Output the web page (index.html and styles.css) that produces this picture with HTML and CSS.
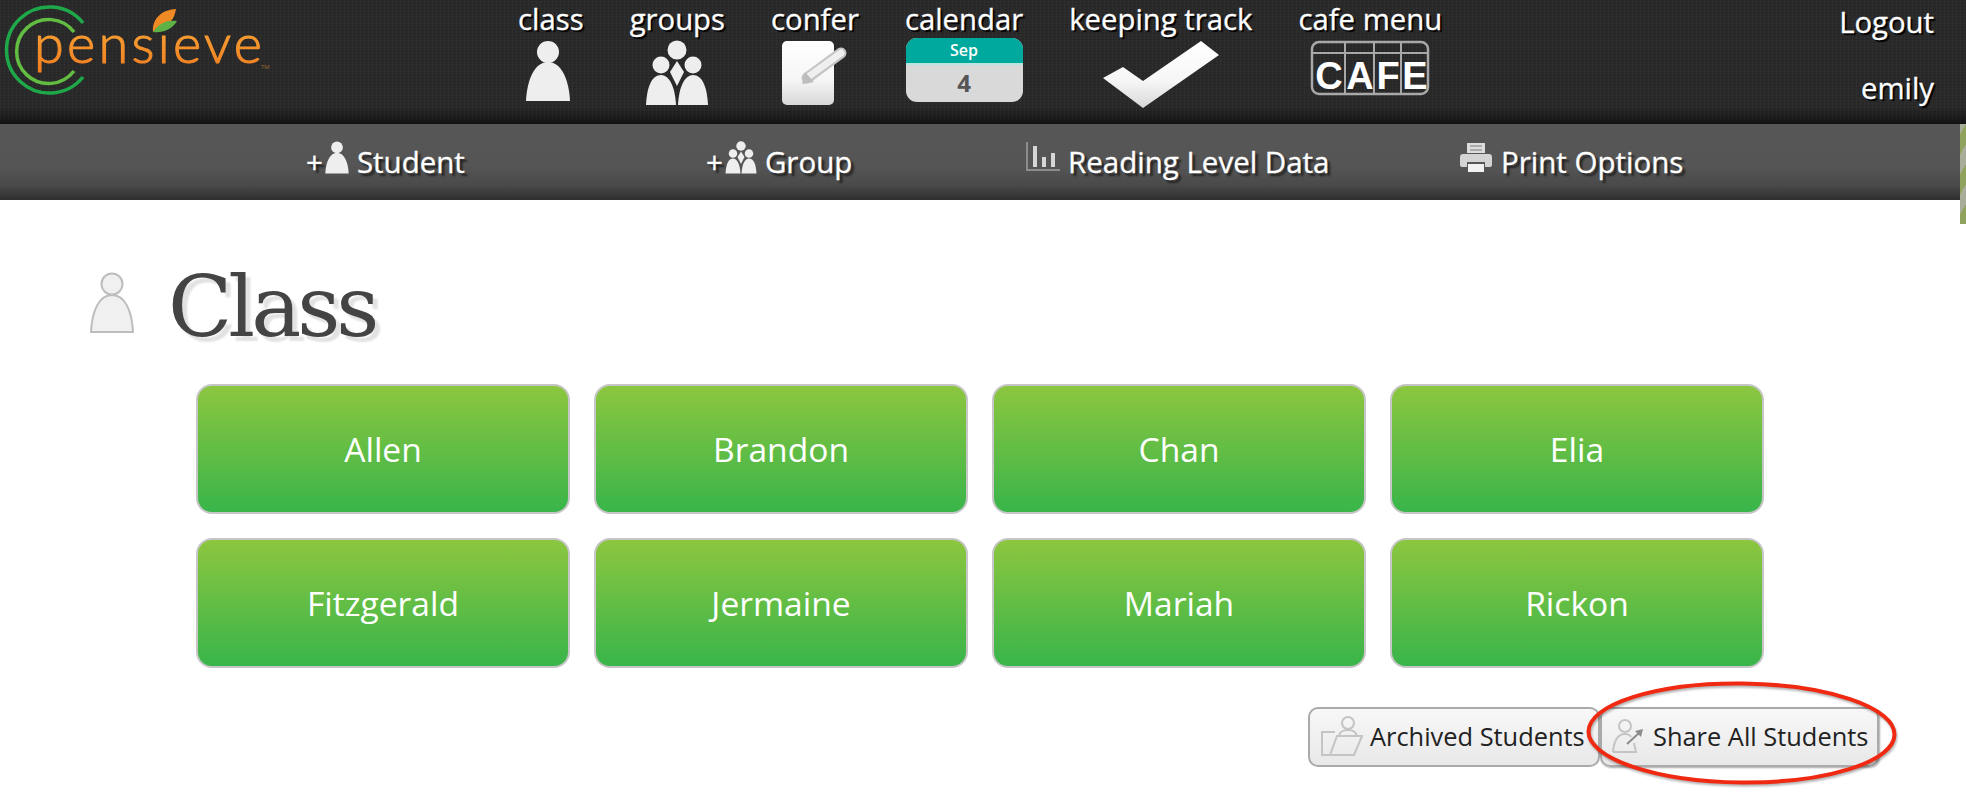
FILE: index.html
```html
<!DOCTYPE html>
<html lang="en">
<head>
    <meta charset="UTF-8">
    <title>Pensieve - Class</title>
    <link rel="stylesheet" href="styles.css">
</head>
<body>
    <svg class="defs" width="0" height="0">
        <defs>
            <linearGradient id="logoText" x1="0" y1="0" x2="0" y2="1">
                <stop offset="0" stop-color="#fbb03b"/>
                <stop offset="1" stop-color="#f07a1f"/>
            </linearGradient>
            <linearGradient id="padFill" x1="0" y1="0" x2="0" y2="1">
                <stop offset="0" stop-color="#ffffff"/>
                <stop offset="0.6" stop-color="#f6f6f6"/>
                <stop offset="1" stop-color="#d8d8d8"/>
            </linearGradient>
            <symbol id="person" viewBox="0 0 44 62">
                <circle cx="22" cy="12" r="11"/>
                <path d="M0 61C1 39 9 22 22 22C35 22 43 39 44 61Z"/>
            </symbol>
            <symbol id="people" viewBox="0 0 64 66">
                <circle cx="32" cy="10" r="9.5"/>
                <circle cx="16" cy="25" r="8.5"/>
                <circle cx="48" cy="25" r="8.5"/>
                <path d="M32 21L39 32L32 46L25 32Z"/>
                <path d="M1 65C2 46 7 35 16 35C24 35 30 46 31 65Z"/>
                <path d="M33 65C34 46 40 35 48 35C57 35 62 46 63 65Z"/>
            </symbol>
        </defs>
    </svg>

    <header class="top-bar">
        <svg class="logo" width="290" height="100" viewBox="0 0 290 100">
            <path d="M83 23A43 43 0 1 0 83 77" fill="none" stroke="#1fa84a" stroke-width="3.5"/>
            <path d="M74 32A32 32 0 1 0 74 71" fill="none" stroke="#62bd42" stroke-width="3.5"/>
            <text x="34" y="63" textLength="228" lengthAdjust="spacing" class="logo-text">pensieve</text>
            <text x="261" y="69" class="logo-tm">TM</text>
            <path d="M153 32C152 20 160 10 176 9C175 14 174 18 171 21C164 23 158 26 153 32Z" fill="#f08a24"/>
            <path d="M153 32C160 22 168 20 177 21C172 30 162 33 153 32Z" fill="#5fb246"/>
        </svg>

        <nav class="main-nav">
            <div class="nav-item">
                <span class="nav-label">class</span>
                <svg class="nav-icon class-icon" width="44" height="62" fill="#eeeeee"><use href="#person"/></svg>
            </div>
            <div class="nav-item">
                <span class="nav-label">groups</span>
                <svg class="nav-icon" width="64" height="66" fill="#eeeeee"><use href="#people"/></svg>
            </div>
            <div class="nav-item">
                <span class="nav-label">confer</span>
                <svg class="nav-icon confer-icon" width="70" height="66" viewBox="0 0 70 66">
                    <rect x="1" y="1" width="52" height="64" rx="5" fill="url(#padFill)"/>
                    <path d="M26 38L60 13" stroke="#c4c4c4" stroke-width="11" stroke-linecap="round"/>
                    <path d="M27 37L60 13" stroke="#efefef" stroke-width="7" stroke-linecap="round"/>
                    <path d="M21 44L24 32L33 42Z" fill="#bdbdbd"/>
                </svg>
            </div>
            <div class="nav-item">
                <span class="nav-label">calendar</span>
                <div class="calendar">
                    <div class="calendar-month">Sep</div>
                    <div class="calendar-day">4</div>
                </div>
            </div>
            <div class="nav-item">
                <span class="nav-label">keeping track</span>
                <svg class="nav-icon" width="118" height="70" viewBox="0 0 118 70">
                    <path d="M1 38L21 27L41 41L99 1L117 15L41 68Z" fill="url(#padFill)"/>
                </svg>
            </div>
            <div class="nav-item">
                <span class="nav-label">cafe menu</span>
                <svg class="nav-icon cafe-icon" width="120" height="56" viewBox="0 0 120 56">
                    <rect x="2" y="2" width="116" height="52" rx="7" fill="none" stroke="#a8a8a8" stroke-width="2.5"/>
                    <path d="M2 13H118M35 2V54M64 2V54M91 2V54" fill="none" stroke="#a8a8a8" stroke-width="2"/>
                    <text x="19" y="49" class="cafe-letter">C</text>
                    <text x="50" y="49" class="cafe-letter">A</text>
                    <text x="78" y="49" class="cafe-letter">F</text>
                    <text x="105" y="49" class="cafe-letter">E</text>
                </svg>
            </div>
        </nav>

        <div class="user-box">
            <a class="nav-label logout">Logout</a>
            <span class="nav-label">emily</span>
        </div>
    </header>

    <div class="sub-bar">
        <div class="sub-item sub-student">
            <span class="plus">+</span>
            <svg width="24" height="33" fill="#eeeeee"><use href="#person"/></svg>
            <span>Student</span>
        </div>
        <div class="sub-item sub-group">
            <span class="plus">+</span>
            <svg width="32" height="33" fill="#eeeeee"><use href="#people"/></svg>
            <span>Group</span>
        </div>
        <div class="sub-item sub-reading">
            <svg width="34" height="30" viewBox="0 0 34 30">
                <path d="M1 0V28H34" fill="none" stroke="#8c8c8c" stroke-width="2"/>
                <path d="M7 4H11V25H7ZM16 15H20V25H16ZM25 11H29V25H25Z" fill="#d6d6d6"/>
            </svg>
            <span>Reading Level Data</span>
        </div>
        <div class="sub-item sub-print">
            <svg width="32" height="31" viewBox="0 0 32 31">
                <path d="M7 1H25V11H7Z" fill="#dddddd"/>
                <path d="M10 4H22M10 8H22" stroke="#999999" stroke-width="1.5"/>
                <path d="M3 12H29Q32 12 32 15V23Q32 25 29 25H25V20H7V25H3Q0 25 0 23V15Q0 12 3 12Z" fill="#d4d4d4"/>
                <path d="M8 22H24V30H8Z" fill="#f2f2f2"/>
            </svg>
            <span>Print Options</span>
        </div>
    </div>
    <div class="edge-strip"></div>

    <main>
        <div class="page-title">
            <svg class="title-icon" width="46" height="62" viewBox="0 0 46 62">
                <circle cx="23" cy="12" r="10.5" fill="#f0f0f0" stroke="#bdbdbd" stroke-width="2"/>
                <path d="M2 60C3 39 10 23 23 23C36 23 43 39 44 60Z" fill="#f0f0f0" stroke="#bdbdbd" stroke-width="2"/>
            </svg>
            <h1>Class</h1>
        </div>

        <div class="student-grid">
            <a class="student-card">Allen</a>
            <a class="student-card">Brandon</a>
            <a class="student-card">Chan</a>
            <a class="student-card">Elia</a>
            <a class="student-card">Fitzgerald</a>
            <a class="student-card">Jermaine</a>
            <a class="student-card">Mariah</a>
            <a class="student-card">Rickon</a>
        </div>

        <div class="actions">
            <button class="action-btn archive-btn">
                <svg width="42" height="40" viewBox="0 0 42 40">
                    <circle cx="27" cy="7" r="6" fill="none" stroke="#c4c4c4" stroke-width="2"/>
                    <path d="M18 20C19 15 22 14 27 14C32 14 35 16 36 20" fill="none" stroke="#c4c4c4" stroke-width="2"/>
                    <path d="M9 39H1V16H14M9 39L16 20H41L33 39Z" fill="none" stroke="#c4c4c4" stroke-width="2"/>
                </svg>
                <span>Archived Students</span>
            </button>
            <button class="action-btn share-btn">
                <svg width="32" height="34" viewBox="0 0 32 34">
                    <circle cx="13" cy="7" r="6" fill="none" stroke="#c4c4c4" stroke-width="2"/>
                    <path d="M1 33C2 22 6 15 13 15C16 15 18 16 19 18M22 24L24 33H1" fill="none" stroke="#c4c4c4" stroke-width="2"/>
                    <path d="M15 25L27 14" stroke="#8c8c8c" stroke-width="2"/>
                    <path d="M23 12L31 10L29 18Z" fill="#8c8c8c"/>
                </svg>
                <span>Share All Students</span>
            </button>
            <svg class="circle-mark" width="317" height="111" viewBox="0 0 317 111">
                <ellipse cx="158.5" cy="53" rx="153" ry="49.5" fill="none" stroke="#f02a12" stroke-width="4" transform="rotate(0.6 158 53)"/>
            </svg>
        </div>
    </main>
</body>
</html>
```

FILE: styles.css
```css
html, body {
    height: 100%;
}
body {
    margin: 0;
    background-color: #fff;
    font-family: "Open Sans", sans-serif;
    overflow: hidden;
    position: relative;
}
.defs {
    display: block;
    height: 0;
}

/* top bar */
.top-bar {
    display: flex;
    height: 124px;
    position: relative;
    background-color: #2a2a2a;
    background-image:
        linear-gradient(rgba(0, 0, 0, 0) 86%, rgba(0, 0, 0, 0.55) 100%),
        repeating-linear-gradient(90deg, rgba(255, 255, 255, 0.025) 0, rgba(255, 255, 255, 0.025) 1px, transparent 1px, transparent 4px),
        repeating-linear-gradient(0deg, rgba(0, 0, 0, 0.09) 0, rgba(0, 0, 0, 0.09) 1px, transparent 1px, transparent 3px);
}
.logo {
    position: absolute;
    left: 0;
    top: 0;
}
.logo-text {
    font-family: Lato, sans-serif;
    font-weight: 300;
    font-size: 54px;
    fill: url(#logoText);
    stroke: url(#logoText);
    stroke-width: 1.1px;
}
.logo-tm {
    font-size: 6px;
    fill: #9a6a30;
}
.main-nav {
    display: flex;
    gap: 46px;
    margin-left: 518px;
}
.nav-item {
    display: flex;
    flex-direction: column;
    align-items: center;
    height: 124px;
}
.nav-label {
    font-size: 29.3px;
    line-height: 38px;
    color: #fff;
    white-space: nowrap;
    -webkit-text-stroke: 0.3px #fff;
    text-shadow: 2px 2px 1px #000;
}
.nav-icon {
    display: block;
    margin-top: 2px;
}
.class-icon {
    margin-right: 5px;
}
.confer-icon {
    margin-left: 2px;
}
.calendar {
    width: 117px;
    height: 64px;
    border-radius: 11px;
    overflow: hidden;
    background-color: #d9d9d9;
    text-align: center;
}
.calendar-month {
    height: 25px;
    line-height: 25px;
    background-color: #00a99d;
    border-bottom: 2px solid #b5e5de;
    color: #fff;
    font-size: 16px;
    font-weight: 600;
}
.calendar-day {
    line-height: 36px;
    color: #555;
    font-size: 24px;
    font-weight: 700;
}
.cafe-letter {
    font-family: "Liberation Sans", sans-serif;
    font-weight: 700;
    font-size: 38px;
    fill: #fff;
    text-anchor: middle;
}
.user-box {
    position: absolute;
    right: 32px;
    top: 3px;
    display: flex;
    flex-direction: column;
    align-items: flex-end;
    gap: 28px;
}

/* second row */
.sub-bar {
    display: flex;
    height: 76px;
    padding-left: 306px;
    background: linear-gradient(#575757 0, #555 55%, #4a4a4a 80%, #2e2e2e 100%);
    color: #fff;
    font-size: 29.5px;
    -webkit-text-stroke: 0.3px #fff;
    text-shadow: 3px 3px 2px #222;
}
.sub-item {
    display: flex;
    align-items: center;
    padding-bottom: 2px;
    gap: 9px;
}
.sub-item svg {
    margin-top: -8px;
}
.plus {
    margin-right: -6px;
}
.sub-student { width: 400px; gap: 8px; }
.sub-group { width: 320px; gap: 8px; }
.sub-reading { width: 434px; gap: 8px; }
.edge-strip {
    position: absolute;
    top: 124px;
    right: 0;
    width: 6px;
    height: 100px;
    background: repeating-linear-gradient(-60deg, #8fa35c 0, #8fa35c 10px, #a7ad98 10px, #a7ad98 20px);
}

/* class page */
.page-title {
    display: flex;
    align-items: flex-start;
    box-sizing: border-box;
    height: 184px;
    padding: 65px 0 0 89px;
}
.title-icon {
    margin-top: 7px;
}
.page-title h1 {
    margin: 0 0 0 33px;
    font-family: "DejaVu Serif", serif;
    font-weight: 400;
    font-size: 84px;
    line-height: 84px;
    letter-spacing: -4px;
    color: #444;
    text-shadow: 5px 5px 2px #e2e2e2;
}
.student-grid {
    display: grid;
    grid-template-columns: repeat(4, 374px);
    grid-auto-rows: 130px;
    gap: 24px;
    margin-left: 196px;
}
.student-card {
    display: flex;
    align-items: center;
    justify-content: center;
    box-sizing: border-box;
    border: 2px solid #c6c6c6;
    border-radius: 16px;
    background: linear-gradient(#8cc63f, #39b54a);
    color: #fff;
    font-size: 33.6px;
}
.actions {
    display: flex;
    position: relative;
    width: 1879px;
    justify-content: flex-end;
    margin-top: 39px;
}
.action-btn {
    display: flex;
    align-items: center;
    box-sizing: border-box;
    height: 60px;
    padding: 0 0 2px;
    border: 2px solid #aaa;
    border-radius: 10px;
    background: linear-gradient(#f8f8f8, #e8e8e8);
    color: #222;
    font-family: "Open Sans", sans-serif;
    font-size: 25.4px;
    white-space: nowrap;
}
.archive-btn {
    width: 292px;
    padding-left: 11px;
    gap: 7px;
}
.share-btn {
    width: 279px;
    padding-left: 10px;
    gap: 9px;
    box-shadow: 1px 1px 2px #aaa;
}
.circle-mark {
    position: absolute;
    right: -21px;
    top: -27px;
    filter: drop-shadow(1px 2px 1px rgba(0, 0, 0, 0.3));
}
```
